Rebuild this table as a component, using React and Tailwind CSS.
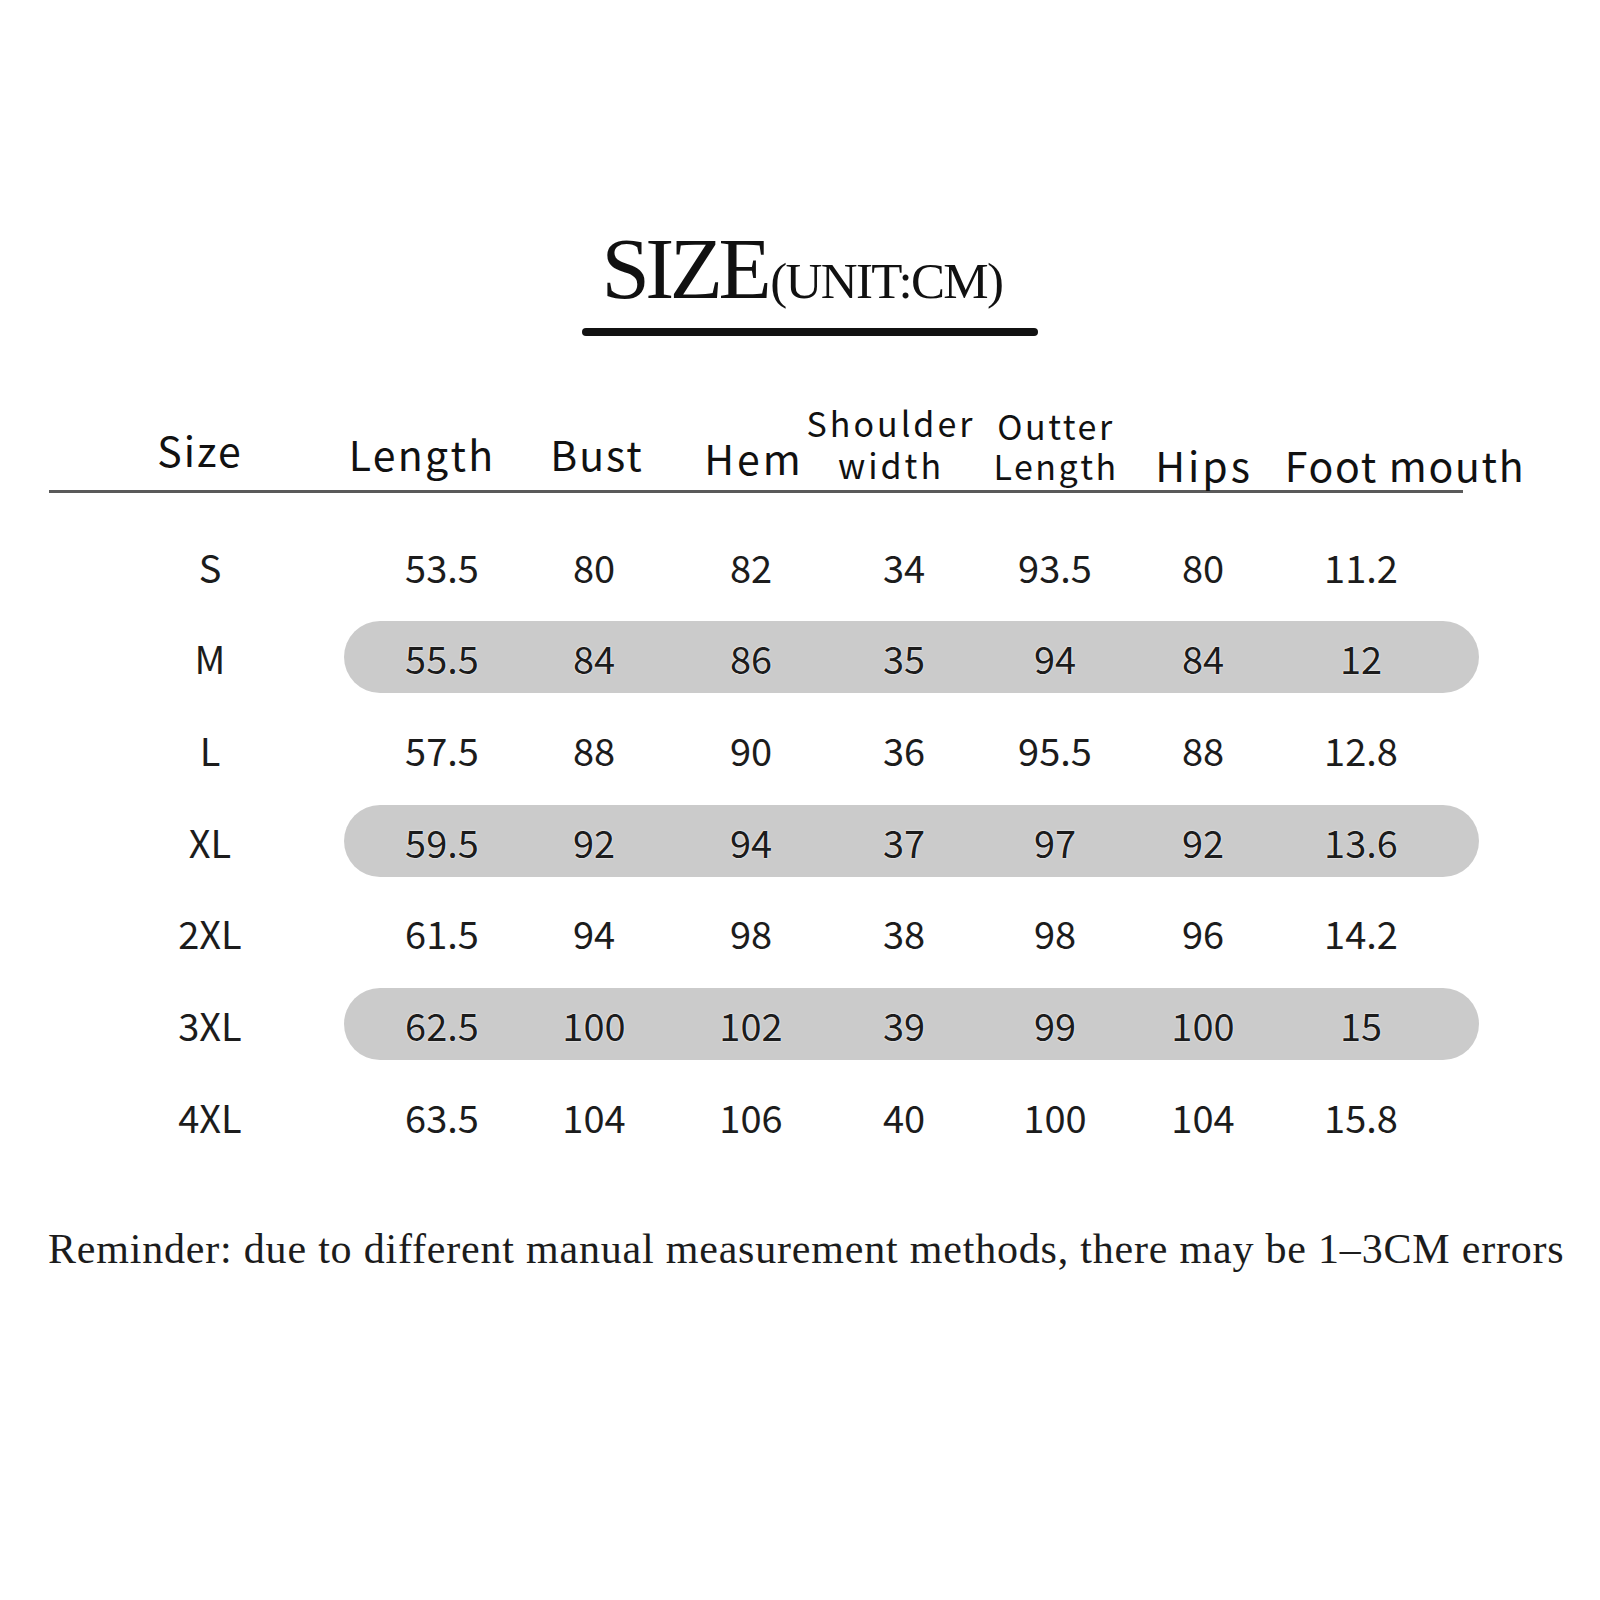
import React from 'react';

const sansFont = { fontFamily: '"Noto Sans CJK SC", "Noto Sans", sans-serif' };

// header cells: width keeps the text centred on its column, mb sets the baseline
const headers = [
  { lines: ['Size'], w: 'w-[300px]', cls: 'mb-[20px] text-[41px] tracking-[2px]' },
  { lines: ['Length'], w: 'w-[144px]', cls: 'mb-[16px] text-[41px] tracking-[2.3px]' },
  { lines: ['Bust'], w: 'w-[206px]', cls: 'mb-[16px] text-[41px] tracking-[2px]' },
  { lines: ['Hem'], w: 'w-[108px]', cls: 'mb-[12px] text-[41px] tracking-[3px]' },
  { lines: ['Shoulder', 'width'], w: 'w-[166px]', cls: 'mb-[8px] gap-[8px] text-[34px] tracking-[3px]' },
  { lines: ['Outter', 'Length'], w: 'w-[164px]', cls: 'mb-[7px] gap-[6px] text-[34px] tracking-[2.5px]' },
  { lines: ['Hips'], w: 'w-[132px]', cls: 'mb-[5px] text-[41px] tracking-[3px]' },
  { lines: ['Foot mouth'], w: 'w-[270px]', cls: 'mb-[5px] text-[41px] tracking-[1.7px]' },
];

const valueWidths = ['w-[196px]', 'w-[108px]', 'w-[206px]', 'w-[100px]', 'w-[202px]', 'w-[94px]', 'w-[222px]'];

const rows = [
  ['S', '53.5', '80', '82', '34', '93.5', '80', '11.2'],
  ['M', '55.5', '84', '86', '35', '94', '84', '12'],
  ['L', '57.5', '88', '90', '36', '95.5', '88', '12.8'],
  ['XL', '59.5', '92', '94', '37', '97', '92', '13.6'],
  ['2XL', '61.5', '94', '98', '38', '98', '96', '14.2'],
  ['3XL', '62.5', '100', '102', '39', '99', '100', '15'],
  ['4XL', '63.5', '104', '106', '40', '100', '104', '15.8'],
];

function SizeRow({ row, shaded }) {
  const [size, ...values] = row;
  return (
    <div className="flex h-[91.67px] items-center text-[38px] leading-none text-[#1c1c1c]">
      <div className="flex w-[344px] justify-center pl-[76px] pt-[2px]">{size}</div>
      <div
        className={`flex h-[72px] w-[1135px] items-center rounded-full pt-[2px] ${
          shaded ? 'bg-[#cbcbcb] [text-shadow:0_0_2px_#fff,0_0_1px_#fff]' : ''
        }`}
      >
        {values.map((v, i) => (
          <div key={i} className={`flex shrink-0 justify-center ${valueWidths[i]}`}>
            {v}
          </div>
        ))}
      </div>
    </div>
  );
}

export default function App() {
  return (
    <div className="h-[1600px] w-[1600px] bg-white text-[#111]">
      {/* title */}
      <div className="flex flex-col items-center pt-[225px]">
        <div
          className="ml-[4px] flex items-baseline leading-none"
          style={{ fontFamily: '"Liberation Serif", serif' }}
        >
          <span className="text-[87px] tracking-[-4.5px]">SIZE</span>
          <span className="ml-[3px] text-[51px] tracking-[-1.6px]">(UNIT:CM)</span>
        </div>
        <div className="mt-[16px] ml-[20px] h-[8px] w-[456px] rounded-full bg-[#111]" />
      </div>

      {/* table */}
      <div style={sansFont}>
        <div className="flex h-[154px] items-end pl-[50px]">
          {headers.map((h) => (
            <div key={h.lines.join()} className={`flex shrink-0 flex-col items-center ${h.w}`}>
              <div className={`flex flex-col items-center whitespace-nowrap leading-none ${h.cls}`}>
                {h.lines.map((l) => (
                  <span key={l}>{l}</span>
                ))}
              </div>
            </div>
          ))}
        </div>
        <div className="ml-[49px] h-[3px] w-[1414px] bg-[#5a5a5a]" />

        <div className="mt-[27px]">
          {rows.map((r, i) => (
            <SizeRow key={r[0]} row={r} shaded={i % 2 === 1} />
          ))}
        </div>
      </div>

      <p
        className="mt-[66px] pl-[48px] text-[42px] leading-none tracking-[0.8px] text-[#1c1c1c] whitespace-nowrap"
        style={{ fontFamily: '"Liberation Serif", serif' }}
      >
        Reminder: due to different manual measurement methods, there may be 1–3CM errors
      </p>
    </div>
  );
}
